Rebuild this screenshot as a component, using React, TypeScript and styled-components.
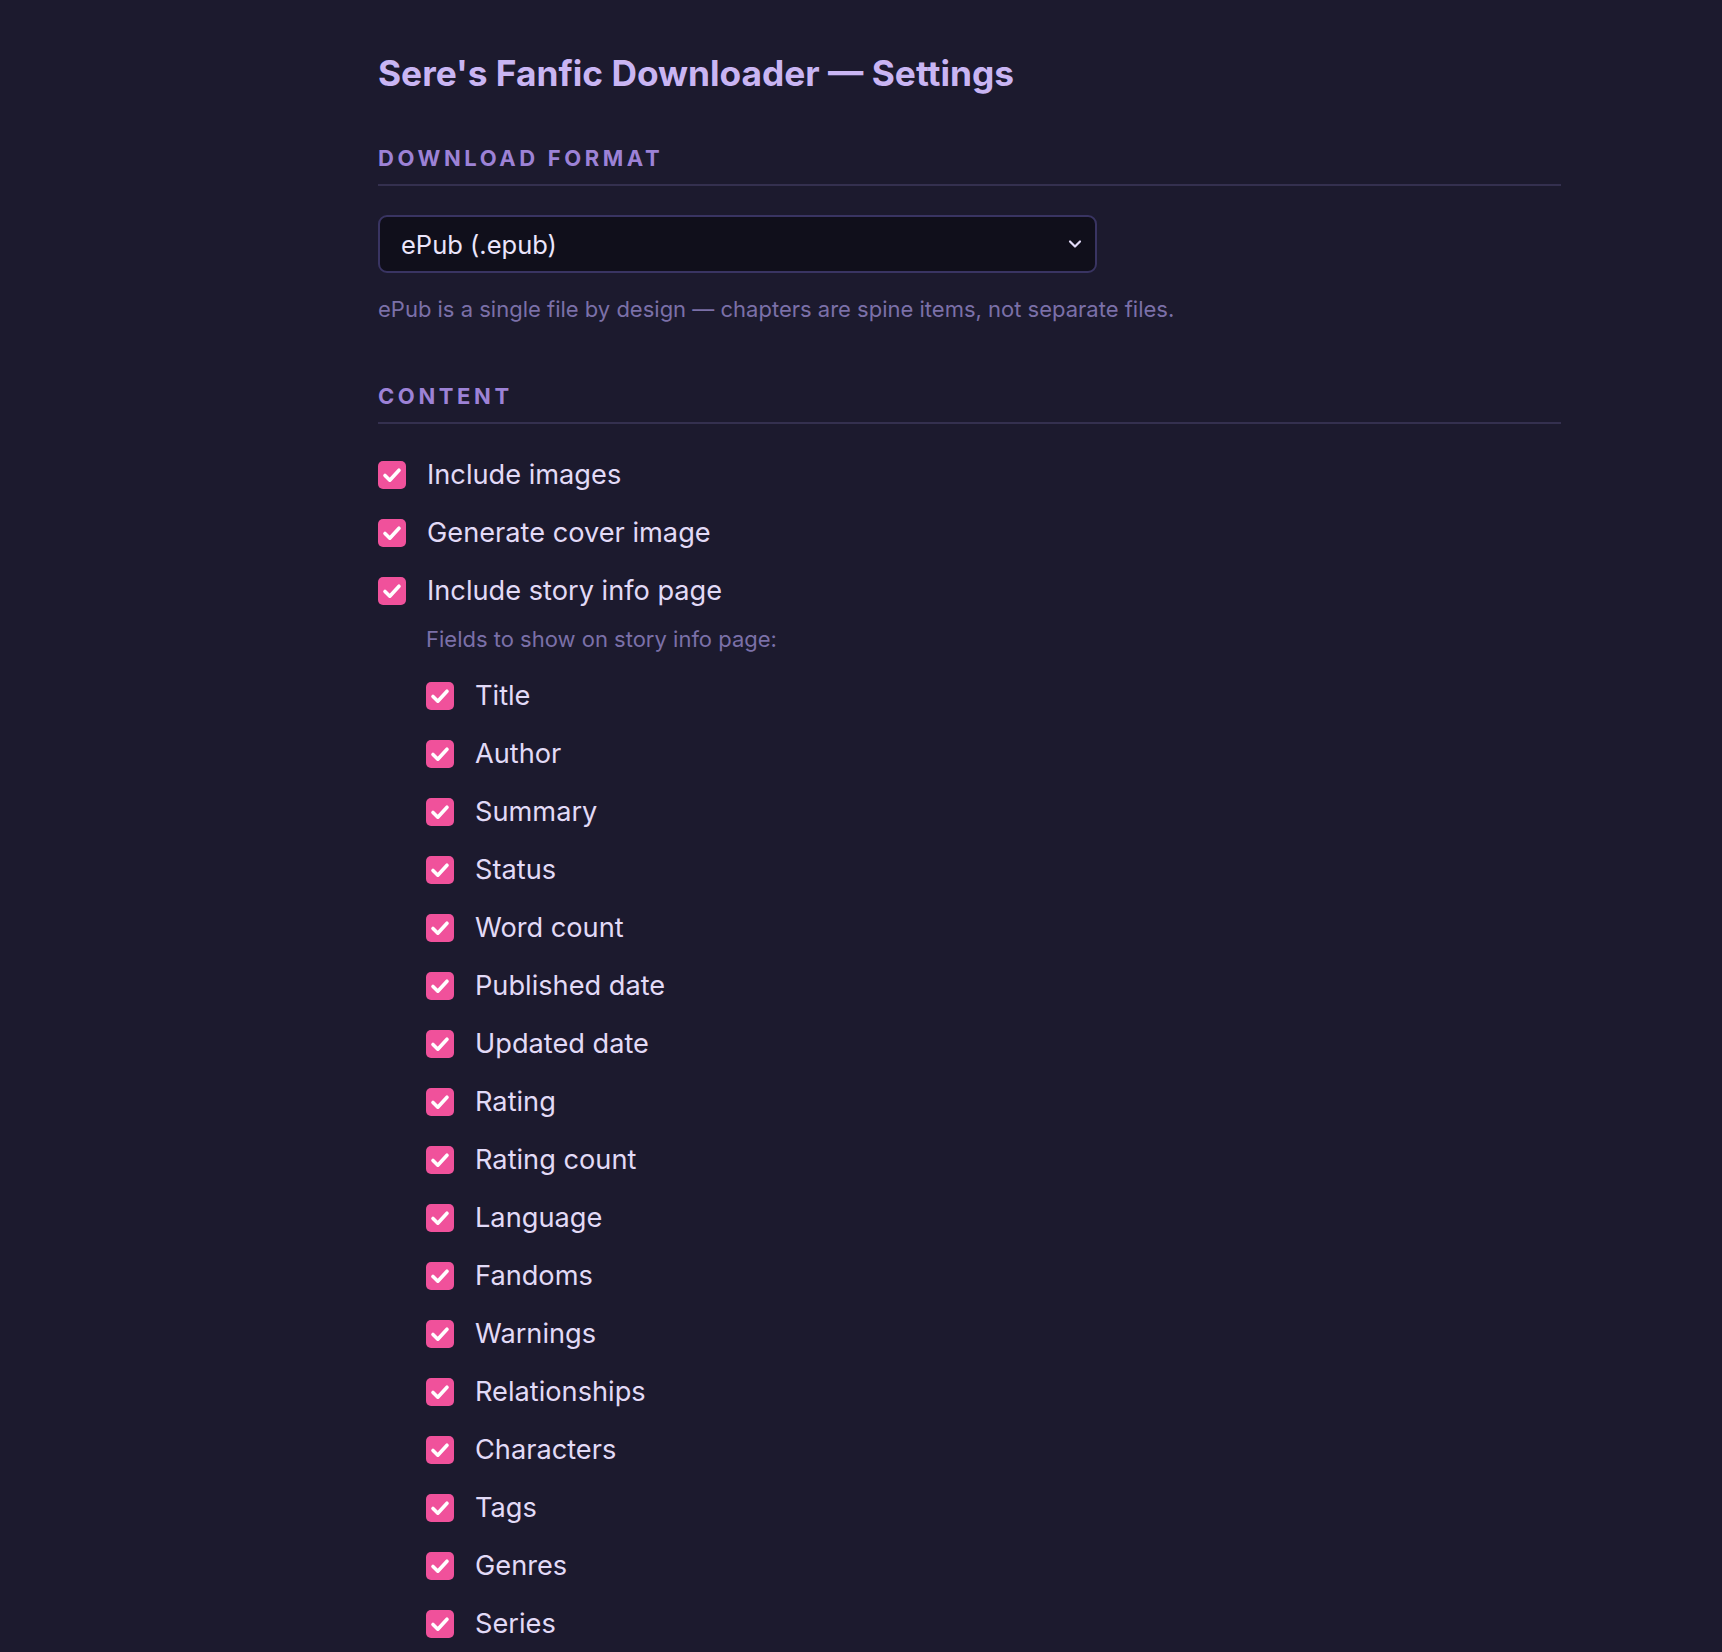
import React from 'react';
import styled, {createGlobalStyle} from 'styled-components';

const GlobalStyle = createGlobalStyle`
  html, body {
    margin: 0;
    padding: 0;
    background: #1c1a2e;
  }
  body {
    font-family: Inter, "Noto Sans", "Liberation Sans", sans-serif;
    color: #e2daf7;
    -webkit-font-smoothing: antialiased;
  }
`;

const INFO_FIELDS = [
  'Title',
  'Author',
  'Summary',
  'Status',
  'Word count',
  'Published date',
  'Updated date',
  'Rating',
  'Rating count',
  'Language',
  'Fandoms',
  'Warnings',
  'Relationships',
  'Characters',
  'Tags',
  'Genres',
  'Series',
];

const CheckIcon = () => (
  <svg width="28" height="28" viewBox="0 0 28 28" fill="none">
    <path
      d="M7 14.5 L11.8 19.2 L21 9.2"
      stroke="#ffffff"
      strokeWidth="3.6"
      strokeLinecap="round"
      strokeLinejoin="round"
    />
  </svg>
);

const ChevronIcon = () => (
  <svg width="14" height="10" viewBox="0 0 14 10" fill="none">
    <path
      d="M2 2.5 L7 7.5 L12 2.5"
      stroke="#e2daf7"
      strokeWidth="2.2"
      strokeLinecap="round"
      strokeLinejoin="round"
    />
  </svg>
);

type CheckRowProps = {
  label: string;
};

const CheckRow: React.FC<CheckRowProps> = ({label}) => (
  <Row>
    <Box>
      <CheckIcon />
    </Box>
    <Label>{label}</Label>
  </Row>
);

const App: React.FC = () => (
  <>
    <GlobalStyle />
    <Page>
      <Title>Sere's Fanfic Downloader — Settings</Title>

      <Section>
        <SectionHeader>Download format</SectionHeader>
        <Select>
          <span>ePub (.epub)</span>
          <ChevronIcon />
        </Select>
        <Hint>
          ePub is a single file by design — chapters are spine items, not separate files.
        </Hint>
      </Section>

      <Section>
        <SectionHeader>Content</SectionHeader>
        <CheckList>
          <CheckRow label="Include images" />
          <CheckRow label="Generate cover image" />
          <Group>
            <CheckRow label="Include story info page" />
            <SubBlock>
              <SubHint>Fields to show on story info page:</SubHint>
              <NestedList>
                {INFO_FIELDS.map(f => (
                  <CheckRow key={f} label={f} />
                ))}
              </NestedList>
            </SubBlock>
          </Group>
        </CheckList>
      </Section>
    </Page>
  </>
);

const Page = styled.main`
  width: 1183px;
  margin-left: 378px;
  padding-top: 50px;
  padding-bottom: 60px;
`;

const Title = styled.h1`
  margin: 0;
  font-size: 35.3px;
  line-height: 48px;
  font-weight: 700;
  color: #c9b5f3;
`;

const Section = styled.section`
  margin-top: 46px;
  & + & {
    margin-top: 59px;
  }
`;

const SectionHeader = styled.h2`
  margin: 0;
  padding-bottom: 12px;
  border-bottom: 2px solid #34304f;
  font-size: 22px;
  line-height: 28px;
  font-weight: 700;
  letter-spacing: 3.6px;
  text-transform: uppercase;
  color: #9d82d6;
`;

const Select = styled.div`
  margin-top: 29px;
  width: 719px;
  height: 58px;
  box-sizing: border-box;
  display: flex;
  align-items: center;
  justify-content: space-between;
  padding: 0 13px 0 21px;
  border: 2px solid #393462;
  border-radius: 9px;
  background: #100f1b;
  font-size: 25.5px;
  color: #ebe5fb;
`;

const Hint = styled.p`
  margin: 22px 0 0;
  font-size: 22px;
  line-height: 28px;
  color: #7b70a8;
`;

const CheckList = styled.div`
  margin-top: 37px;
  display: flex;
  flex-direction: column;
  gap: 30px;
`;

const Group = styled.div`
  display: flex;
  flex-direction: column;
`;

const SubBlock = styled.div`
  padding-left: 48px;
  margin-top: 20px;
`;

const SubHint = styled.div`
  font-size: 22px;
  line-height: 28px;
  color: #7b70a8;
`;

const NestedList = styled.div`
  margin-top: 29px;
  display: flex;
  flex-direction: column;
  gap: 30px;
`;

const Row = styled.label`
  display: flex;
  align-items: center;
  gap: 21px;
  height: 28px;
`;

const Box = styled.span`
  width: 28px;
  height: 28px;
  flex: none;
  border-radius: 5px;
  background: #f0519b;
  display: flex;
  align-items: center;
  justify-content: center;
`;

const Label = styled.span`
  font-size: 27.2px;
  line-height: 28px;
  color: #e2daf7;
`;

export default App;
